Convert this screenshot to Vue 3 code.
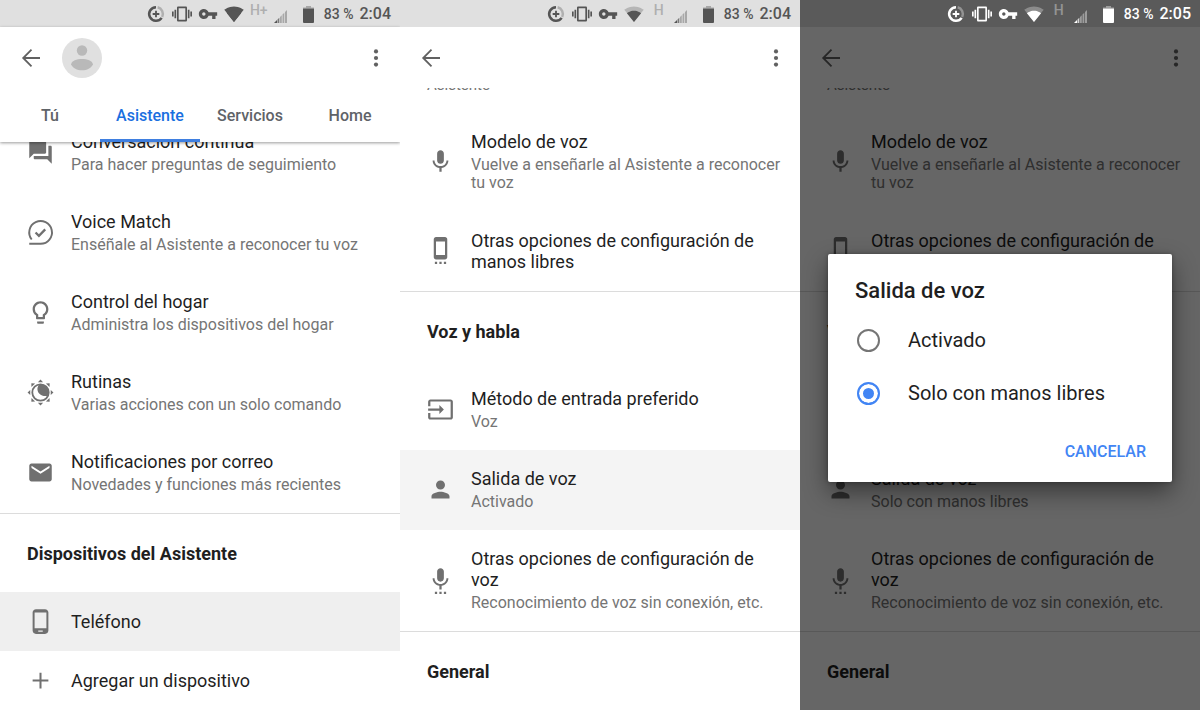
<script setup>
import { ref, computed } from 'vue'

const icons = {
  forum: 'M21 6h-2v9H6v2c0 .55.45 1 1 1h11l4 4V7c0-.55-.45-1-1-1zm-4 6V3c0-.55-.45-1-1-1H3c-.55 0-1 .45-1 1v14l4-4h10c.55 0 1-.45 1-1z',
  bulb: 'M9 21c0 .55.45 1 1 1h4c.55 0 1-.45 1-1v-1H9v1zm3-19C8.14 2 5 5.14 5 9c0 2.38 1.19 4.47 3 5.74V17c0 .55.45 1 1 1h6c.55 0 1-.45 1-1v-2.26c1.81-1.27 3-3.36 3-5.74 0-3.86-3.14-7-7-7zm2.85 11.1l-.85.6V16h-4v-2.3l-.85-.6A4.997 4.997 0 0 1 7 9c0-2.76 2.24-5 5-5s5 2.24 5 5c0 1.63-.8 3.16-2.15 4.1z',
  mail: 'M20 4H4c-1.1 0-1.99.9-1.99 2L2 18c0 1.1.9 2 2 2h16c1.1 0 2-.9 2-2V6c0-1.1-.9-2-2-2zm0 4l-8 5-8-5V6l8 5 8-5v2z',
  phone: 'M16 1H8C6.34 1 5 2.34 5 4v16c0 1.66 1.34 3 3 3h8c1.66 0 3-1.34 3-3V4c0-1.66-1.34-3-3-3zm-2 20h-4v-1h4v1zm3.25-3H6.75V4h10.5v14z',
  plus: 'M19 12.9h-6.1V19h-1.8v-6.1H5v-1.8h6.1V5h1.8v6.1H19z',
  mic: 'M12 14c1.66 0 2.99-1.34 2.99-3L15 5c0-1.66-1.34-3-3-3S9 3.34 9 5v6c0 1.66 1.34 3 3 3zm5.3-3c0 3-2.54 5.1-5.3 5.1S6.7 14 6.7 11H5c0 3.41 2.72 6.23 6 6.72V21h2v-3.28c3.28-.48 6-3.3 6-6.72h-1.7z',
  cell: 'M7 24h2v-2H7v2zm4 0h2v-2h-2v2zm4 0h2v-2h-2v2zM16 .01L8 0C6.9 0 6 .9 6 2v16c0 1.1.9 2 2 2h8c1.1 0 2-.9 2-2V2c0-1.1-.9-1.99-2-1.99zM16 16H8V4h8v12z',
  input: 'M21 3.01H3c-1.1 0-2 .9-2 2V9h2V4.99h18v14.03H3V15H1v4.01c0 1.1.9 1.98 2 1.98h18c1.1 0 2-.88 2-1.98v-14c0-1.11-.9-2-2-2zM11 16l4-4-4-4v3H1v2h10v3z',
  person: 'M12 12c2.21 0 4-1.79 4-4s-1.79-4-4-4-4 1.79-4 4 1.79 4 4 4zm0 2c-2.67 0-8 1.34-8 4v2h16v-2c0-2.66-5.33-4-8-4z',
  voice: 'M7 24h2v-2H7v2zm5-11c1.66 0 2.99-1.34 2.99-3L15 4c0-1.66-1.34-3-3-3S9 2.34 9 4v6c0 1.66 1.34 3 3 3zm-1 11h2v-2h-2v2zm4 0h2v-2h-2v2zm4-14h-1.7c0 3-2.54 5.1-5.3 5.1S6.7 13 6.7 10H5c0 3.41 2.72 6.23 6 6.72V20h2v-3.28c3.28-.49 6-3.31 6-6.72z'
}

const tabs = ['Tú', 'Asistente', 'Servicios', 'Home']
const activeTab = ref('Asistente')
const options = ['Activado', 'Solo con manos libres']
const output = ref('Solo con manos libres')

const voiceSections = (value, pressed) => [
  {
    rows: [
      { icon: 'mic', title: 'Modelo de voz', sub: 'Vuelve a enseñarle al Asistente a reconocer tu voz' },
      { icon: 'cell', title: 'Otras opciones de configuración de manos libres' }
    ]
  },
  {
    heading: 'Voz y habla',
    rows: [
      { icon: 'input', title: 'Método de entrada preferido', sub: 'Voz' },
      { icon: 'person', title: 'Salida de voz', sub: value, pressed },
      { icon: 'voice', title: 'Otras opciones de configuración de voz', sub: 'Reconocimiento de voz sin conexión, etc.' }
    ]
  },
  { heading: 'General', rows: [] }
]

const phones = computed(() => [
  {
    id: 'assistant',
    time: '2:04',
    net: 'H+',
    wifiFull: true,
    tabbed: true,
    sections: [
      {
        rows: [
          { icon: 'forum', title: 'Conversación continua', sub: 'Para hacer preguntas de seguimiento' },
          { icon: 'match', title: 'Voice Match', sub: 'Enséñale al Asistente a reconocer tu voz' },
          { icon: 'bulb', title: 'Control del hogar', sub: 'Administra los dispositivos del hogar' },
          { icon: 'routine', title: 'Rutinas', sub: 'Varias acciones con un solo comando' },
          { icon: 'mail', title: 'Notificaciones por correo', sub: 'Novedades y funciones más recientes' }
        ]
      },
      {
        heading: 'Dispositivos del Asistente',
        rows: [
          { icon: 'phone', title: 'Teléfono', short: true, strong: true },
          { icon: 'plus', title: 'Agregar un dispositivo', short: true }
        ]
      }
    ]
  },
  { id: 'voice', time: '2:04', net: 'H', sections: voiceSections('Activado', true) },
  { id: 'dialog', time: '2:05', net: 'H', dialog: true, sections: voiceSections(output.value, false) }
])
</script>

<template>
  <main class="screens">
    <section v-for="p in phones" :key="p.id" class="phone">
      <div class="status" :class="{ dark: p.dialog }">
        <svg class="glyph" viewBox="0 0 24 24">
          <path d="M12 3.8A8.2 8.2 0 1 0 18.8 16.6" fill="none" stroke="currentColor" stroke-width="3" />
          <path d="M14 4A8.2 8.2 0 0 1 19.4 15.5" fill="none" stroke="currentColor" stroke-width="3" opacity=".35" />
          <path d="M12 8v8M8 12h8" stroke="currentColor" stroke-width="2.2" />
        </svg>
        <svg class="glyph" viewBox="0 0 24 24"><path d="M0 15h2V9H0v6zm3 2h2V7H3v10zm19-8v6h2V9h-2zm-3 8h2V7h-2v10zM16.5 3h-9C6.67 3 6 3.67 6 4.5v15c0 .83.67 1.5 1.5 1.5h9c.83 0 1.5-.67 1.5-1.5v-15c0-.83-.67-1.5-1.5-1.5zM16 19H8V5h8v14z" /></svg>
        <svg class="glyph" viewBox="0 0 24 24"><path d="M12.65 10C11.83 7.67 9.61 6 7 6c-3.31 0-6 2.69-6 6s2.69 6 6 6c2.61 0 4.83-1.67 5.65-4H17v4h4v-4h2v-4H12.65zM7 14c-1.1 0-2-.9-2-2s.9-2 2-2 2 .9 2 2-.9 2-2 2z" /></svg>
        <svg class="glyph" viewBox="0 0 24 24">
          <path d="M12.01 21.49L23.64 7c-.45-.34-4.93-4-11.64-4C5.28 3 .81 6.66.36 7l11.63 14.49z" :opacity="p.wifiFull ? 1 : 0.3" />
          <path d="M3.53 10.95l8.47 10.55 8.47-10.55C20.04 10.62 16.81 8 12 8c-4.81 0-8.04 2.62-8.47 2.95z" />
        </svg>
        <span class="net">{{ p.net }}</span>
        <svg class="signal" viewBox="0 0 14 18">
          <path d="M0 18l3-3v3z" />
          <path d="M3.5 14.5l1.8-1.8V18H3.5z" opacity=".75" />
          <path d="M6 12l1.8-1.8V18H6zM8.5 9.5l1.8-1.8V18H8.5zM11 7l2-2v13h-2z" opacity=".4" />
        </svg>
        <svg class="battery" viewBox="0 0 24 18">
          <path d="M9 3.5v-1h3V1h5v1.5h3v1z" opacity=".4" />
          <path d="M9 3.5h11V17a1 1 0 0 1-1 1h-9a1 1 0 0 1-1-1z" />
        </svg>
        <span class="pct">83 %</span>
        <time class="time">{{ p.time }}</time>
      </div>

      <header class="top" :class="{ raised: p.tabbed }">
        <div class="appbar">
          <button class="iconbtn" type="button" aria-label="Atrás">
            <svg class="nav" viewBox="0 0 20 20"><path d="M19 10H2.2M10.5 1.7L2.2 10l8.3 8.3" fill="none" stroke="currentColor" stroke-width="1.8" /></svg>
          </button>
          <svg v-if="p.tabbed" class="avatar" viewBox="0 0 40 40">
            <circle cx="20" cy="20" r="20" fill="#e0e0e0" />
            <circle cx="20" cy="12.5" r="5.2" fill="#b9b9b9" />
            <path d="M9 26.2c1-3.6 5.500-5.200 11-5.200s10 1.600 11 5.200c-2 4-6 6-11 6s-9-2-11-6z" fill="#b9b9b9" />
          </svg>
          <button class="iconbtn more" type="button" aria-label="Más opciones">
            <svg class="nav" viewBox="0 0 20 20"><circle cx="10" cy="3.4" r="2.1" /><circle cx="10" cy="10" r="2.1" /><circle cx="10" cy="16.6" r="2.1" /></svg>
          </button>
        </div>
        <nav v-if="p.tabbed" class="tabs">
          <button v-for="t in tabs" :key="t" type="button" class="tab" :class="{ active: t === activeTab }" @click="activeTab = t">{{ t }}</button>
        </nav>
      </header>

      <div class="viewport">
        <div class="scroller" :class="{ tabbed: p.tabbed }">
          <p v-if="!p.tabbed" class="caption">Asistente</p>
          <section v-for="(s, i) in p.sections" :key="i" class="group">
            <h2 v-if="s.heading" class="heading">{{ s.heading }}</h2>
            <button v-for="r in s.rows" :key="r.title" type="button" class="row" :class="{ short: r.short, pressed: r.pressed, strong: r.strong }">
              <svg class="icon" viewBox="0 0 24 24">
                <g v-if="r.icon === 'match'" fill="none" stroke="currentColor" stroke-width="1.7">
                  <path d="M2 22h10A10.1 10.1 0 1 0 4.2 18.2" />
                  <path d="M7.6 12l3 3 5.6-5.8" stroke-width="2" />
                </g>
                <g v-else-if="r.icon === 'routine'">
                  <circle cx="12" cy="12" r="7.3" fill="none" stroke="currentColor" stroke-width="1.6" />
                  <path d="M11 4.8A7.2 7.2 0 0 1 18.7 14.8C13.5 16.2 8.8 12.8 9.3 8.2c.2-1.4.8-2.5 1.7-3.4z" />
                  <path v-for="n in 8" :key="n" d="M9.7 2.9L12 .5l2.3 2.4z" :transform="`rotate(${n * 45} 12 12)`" />
                </g>
                <path v-else :d="icons[r.icon]" />
              </svg>
              <span class="text">
                <span class="title">{{ r.title }}</span>
                <span v-if="r.sub" class="sub">{{ r.sub }}</span>
              </span>
            </button>
          </section>
        </div>
      </div>

      <div v-if="p.dialog" class="scrim">
        <form class="dialog" role="dialog" aria-labelledby="dialog-title" @submit.prevent>
          <h2 id="dialog-title" class="dialog-title">Salida de voz</h2>
          <label v-for="o in options" :key="o" class="option">
            <input v-model="output" class="radio" type="radio" name="output" :value="o" />
            <span>{{ o }}</span>
          </label>
          <button type="button" class="cancel">CANCELAR</button>
        </form>
      </div>
    </section>
  </main>
</template>

<style>
body {
  margin: 0;
  background: #fff;
}
</style>

<style scoped>
.screens {
  display: grid;
  grid-template-columns: repeat(3, 1fr);
  height: 100vh;
  overflow: hidden;
  font-family: Roboto, "Liberation Sans", sans-serif;
  color: #1f1f1f;
}
.phone {
  position: relative;
  display: flex;
  flex-direction: column;
  min-width: 0;
  min-height: 0;
  overflow: hidden;
  background: #fff;
}
button {
  margin: 0;
  padding: 0;
  border: 0;
  background: none;
  font: inherit;
  color: inherit;
  text-align: left;
  cursor: pointer;
}
svg {
  display: block;
  flex: none;
  fill: currentColor;
  overflow: visible;
}
.status {
  flex: none;
  display: flex;
  align-items: center;
  justify-content: flex-end;
  gap: 6px;
  height: 27px;
  padding-right: 9px;
  box-sizing: border-box;
  background: #e0e0e0;
  color: #555;
}
.status.dark {
  background: #5a5a5a;
  color: #fff;
}
.glyph {
  width: 20px;
  height: 20px;
}
.net {
  align-self: flex-start;
  width: 18px;
  font-size: 14px;
  line-height: 20px;
  font-weight: 500;
  text-align: center;
  opacity: .35;
}
.signal {
  width: 14px;
  height: 18px;
}
.battery {
  width: 24px;
  height: 18px;
}
.pct {
  font-size: 14px;
  font-weight: 500;
}
.time {
  font-size: 16px;
  font-weight: 500;
}
.top {
  flex: none;
  position: relative;
  z-index: 1;
  background: #fff;
}
.raised {
  box-shadow: 0 1px 3px rgba(0, 0, 0, .4);
}
.appbar {
  display: flex;
  align-items: center;
  height: 61px;
  padding: 0 14px 0 21px;
  color: #616161;
}
.iconbtn {
  display: flex;
}
.nav {
  width: 20px;
  height: 20px;
}
.avatar {
  width: 40px;
  height: 40px;
  margin-left: 21px;
}
.more {
  margin-left: auto;
}
.tabs {
  display: grid;
  grid-template-columns: repeat(4, 1fr);
  height: 54px;
}
.tab {
  padding-top: 3px;
  border-bottom: 3px solid transparent;
  font-size: 16px;
  font-weight: 500;
  text-align: center;
  color: #5f6368;
}
.tab.active {
  border-bottom-color: #3f7fe0;
  color: #1a6fdf;
}
.viewport {
  flex: 1;
  min-height: 0;
  overflow: hidden;
}
.scroller {
  margin-top: -12px;
}
.scroller.tabbed {
  margin-top: -29px;
}
.caption {
  margin: 0;
  padding: 0 27px 19px;
  font-size: 15px;
  line-height: 18px;
  color: #757575;
}
.group + .group {
  border-top: 1px solid #dcdcdc;
}
.heading {
  margin: 0;
  padding: 29px 27px 28px;
  font-size: 18px;
  line-height: 21px;
  font-weight: 700;
}
.row {
  display: flex;
  align-items: center;
  gap: 17px;
  box-sizing: border-box;
  width: 100%;
  min-height: 80px;
  padding: 18px 17px 19px 27px;
}
.row.short {
  min-height: 59px;
  padding-top: 0;
  padding-bottom: 0;
}
.row.pressed {
  background: #f4f4f4;
}
.row.strong {
  background: #efefef;
}
.icon {
  width: 27px;
  height: 27px;
  color: #707070;
}
.text {
  display: flex;
  flex-direction: column;
  gap: 4px;
}
.title {
  font-size: 18px;
  line-height: 21px;
}
.sub {
  font-size: 16px;
  line-height: 18px;
  color: #757575;
}
.scrim {
  position: absolute;
  inset: 27px 0 0;
  z-index: 2;
  display: flex;
  align-items: center;
  justify-content: center;
  padding: 0 28px 2px;
  background: rgba(0, 0, 0, .6);
}
.dialog {
  flex: 1;
  display: flex;
  flex-direction: column;
  padding: 24px 26px 10px 27px;
  border-radius: 2px;
  background: #fff;
  box-shadow: 0 10px 24px rgba(0, 0, 0, .45), 0 0 4px rgba(0, 0, 0, .3);
}
.dialog-title {
  margin: 0 0 10px;
  font-size: 22px;
  line-height: 26px;
  font-weight: 500;
}
.option {
  display: flex;
  align-items: center;
  gap: 28px;
  height: 53px;
  font-size: 20px;
  cursor: pointer;
}
.radio {
  appearance: none;
  flex: none;
  box-sizing: border-box;
  width: 23px;
  height: 23px;
  margin: 0 0 0 2px;
  border: 2px solid #757575;
  border-radius: 50%;
}
.radio:checked {
  border-color: #4285f4;
  background: #4285f4;
  box-shadow: inset 0 0 0 4px #fff;
}
.cancel {
  align-self: flex-end;
  height: 40px;
  margin-top: 12px;
  font-size: 16px;
  font-weight: 500;
  color: #4285f4;
}
</style>
